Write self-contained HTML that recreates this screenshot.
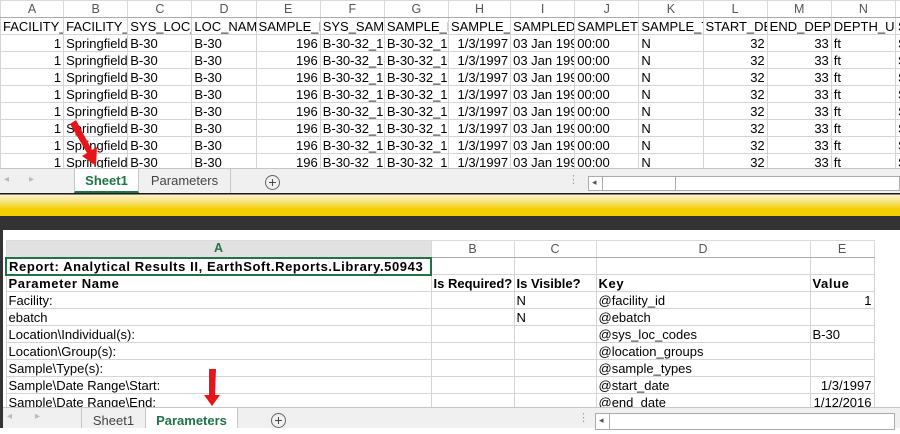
<!DOCTYPE html>
<html><head><meta charset="utf-8"><style>
*{margin:0;padding:0;box-sizing:border-box}
body{width:900px;height:428px;overflow:hidden;background:#fff;font-family:"Liberation Sans","DejaVu Sans",sans-serif;font-size:13px;color:#000;position:relative}
table{border-collapse:collapse;table-layout:fixed;position:absolute}
td{border:1px solid #d4d4d4;height:17px;padding:0 2px;white-space:nowrap;overflow:hidden;line-height:15px}
tr.h td{background:#fff;color:#555;text-align:center;font-size:12.5px;border-color:#dadada;border-bottom:1px solid #ababab}
.r{text-align:right}
.b td{font-weight:bold;letter-spacing:0.6px}
.tabbar{position:absolute;left:0;width:900px;background:#f0f0f0;border-top:1px solid #c6c6c6}
.tab{position:absolute;top:0;height:100%;text-align:center;color:#444;font-size:13px;line-height:24px;border-right:1px solid #c6c6c6}
.tab.on{background:#fff;color:#217346;font-weight:bold;border-bottom:2px solid #217346}
.plus{position:absolute;width:15px;height:15px;border:1px solid #666;border-radius:50%;color:#444;text-align:center;line-height:12px;font-size:14px}
</style></head><body>

<table style="left:0;top:0;width:912px">
<colgroup><col style="width:63px"><col style="width:64px"><col style="width:64px"><col style="width:64px"><col style="width:64px"><col style="width:64px"><col style="width:64px"><col style="width:62px"><col style="width:64px"><col style="width:64px"><col style="width:64px"><col style="width:64px"><col style="width:64px"><col style="width:64px"><col style="width:16px"></colgroup>
<tr class="h"><td>A</td><td>B</td><td>C</td><td>D</td><td>E</td><td>F</td><td>G</td><td>H</td><td>I</td><td>J</td><td>K</td><td>L</td><td>M</td><td>N</td><td></td></tr>
<tr><td>FACILITY_I</td><td>FACILITY_C</td><td>SYS_LOC_C</td><td>LOC_NAME</td><td>SAMPLE_ID</td><td>SYS_SAMP</td><td>SAMPLE_N</td><td>SAMPLE_D</td><td>SAMPLEDA</td><td>SAMPLETIM</td><td>SAMPLE_T</td><td>START_DE</td><td>END_DEPT</td><td>DEPTH_UN</td><td>S</td></tr>
<tr><td class="r">1</td><td>Springfield</td><td>B-30</td><td>B-30</td><td class="r">196</td><td>B-30-32_19</td><td>B-30-32_19</td><td class="r">1/3/1997</td><td>03 Jan 199</td><td>00:00</td><td>N</td><td class="r">32</td><td class="r">33</td><td>ft</td><td>S</td></tr>
<tr><td class="r">1</td><td>Springfield</td><td>B-30</td><td>B-30</td><td class="r">196</td><td>B-30-32_19</td><td>B-30-32_19</td><td class="r">1/3/1997</td><td>03 Jan 199</td><td>00:00</td><td>N</td><td class="r">32</td><td class="r">33</td><td>ft</td><td>S</td></tr>
<tr><td class="r">1</td><td>Springfield</td><td>B-30</td><td>B-30</td><td class="r">196</td><td>B-30-32_19</td><td>B-30-32_19</td><td class="r">1/3/1997</td><td>03 Jan 199</td><td>00:00</td><td>N</td><td class="r">32</td><td class="r">33</td><td>ft</td><td>S</td></tr>
<tr><td class="r">1</td><td>Springfield</td><td>B-30</td><td>B-30</td><td class="r">196</td><td>B-30-32_19</td><td>B-30-32_19</td><td class="r">1/3/1997</td><td>03 Jan 199</td><td>00:00</td><td>N</td><td class="r">32</td><td class="r">33</td><td>ft</td><td>S</td></tr>
<tr><td class="r">1</td><td>Springfield</td><td>B-30</td><td>B-30</td><td class="r">196</td><td>B-30-32_19</td><td>B-30-32_19</td><td class="r">1/3/1997</td><td>03 Jan 199</td><td>00:00</td><td>N</td><td class="r">32</td><td class="r">33</td><td>ft</td><td>S</td></tr>
<tr><td class="r">1</td><td>Springfield</td><td>B-30</td><td>B-30</td><td class="r">196</td><td>B-30-32_19</td><td>B-30-32_19</td><td class="r">1/3/1997</td><td>03 Jan 199</td><td>00:00</td><td>N</td><td class="r">32</td><td class="r">33</td><td>ft</td><td>S</td></tr>
<tr><td class="r">1</td><td>Springfield</td><td>B-30</td><td>B-30</td><td class="r">196</td><td>B-30-32_19</td><td>B-30-32_19</td><td class="r">1/3/1997</td><td>03 Jan 199</td><td>00:00</td><td>N</td><td class="r">32</td><td class="r">33</td><td>ft</td><td>S</td></tr>
<tr><td class="r">1</td><td>Springfield</td><td>B-30</td><td>B-30</td><td class="r">196</td><td>B-30-32_19</td><td>B-30-32_19</td><td class="r">1/3/1997</td><td>03 Jan 199</td><td>00:00</td><td>N</td><td class="r">32</td><td class="r">33</td><td>ft</td><td>S</td></tr>
</table>

<div class="tabbar" style="top:168px;height:25px">
 <span style="position:absolute;left:4px;top:5px;color:#bbb;font-size:10px">◂</span>
 <span style="position:absolute;left:29px;top:5px;color:#bbb;font-size:10px">▸</span>
 <div class="tab on" style="left:74px;width:65px;border-left:1px solid #c6c6c6">Sheet1</div>
 <div class="tab" style="left:139px;width:92px">Parameters</div>
 <div class="plus" style="left:265px;top:6px">+</div>
 <span style="position:absolute;left:568px;top:4px;color:#999;font-size:11px">⋮</span>
 <div style="position:absolute;left:588px;top:7px;width:312px;height:15px;border:1px solid #ababab;background:#fff"></div>
 <div style="position:absolute;left:588px;top:7px;width:88px;height:15px;border:1px solid #ababab;background:#fff"><span style="position:absolute;left:3px;top:0;font-size:9px;color:#555">◂</span><div style="position:absolute;left:13px;top:0;width:1px;height:13px;background:#ababab"></div></div>
</div>

<div style="position:absolute;left:0;top:193px;width:900px;height:23px;background:linear-gradient(#1a1a1a 0,#1a1a1a 1px,#fdf2c8 2px,#f8e27a 9px,#f4cf00 16px,#f4cf00 23px)"></div>
<div style="position:absolute;left:0;top:216px;width:900px;height:14px;background:#333"></div>
<div style="position:absolute;left:0;top:230px;width:3px;height:198px;background:#333"></div>
<div style="position:absolute;left:3px;top:230px;width:897px;height:198px;background:#fff"></div>

<table style="left:5px;top:240px;width:880px">
<colgroup><col style="width:425px"><col style="width:83px"><col style="width:82px"><col style="width:214px"><col style="width:64px"><col style="width:12px"></colgroup>
<tr class="h"><td style="background:#e1e1e1;color:#217346;font-weight:bold;border-bottom:2px solid #217346">A</td><td>B</td><td>C</td><td>D</td><td>E</td><td style="border:none"></td></tr>
<tr class="b"><td style="border:2px solid #217346">Report: Analytical Results II, EarthSoft.Reports.Library.50943</td><td></td><td></td><td></td><td></td><td style="border:none"></td></tr>
<tr class="b"><td>Parameter Name</td><td style="letter-spacing:0">Is Required?</td><td style="letter-spacing:0">Is Visible?</td><td>Key</td><td>Value</td><td style="border:none"></td></tr>
<tr><td>Facility:</td><td></td><td>N</td><td>@facility_id</td><td class="r">1</td><td style="border:none"></td></tr>
<tr><td>ebatch</td><td></td><td>N</td><td>@ebatch</td><td></td><td style="border:none"></td></tr>
<tr><td>Location\Individual(s):</td><td></td><td></td><td>@sys_loc_codes</td><td>B-30</td><td style="border:none"></td></tr>
<tr><td>Location\Group(s):</td><td></td><td></td><td>@location_groups</td><td></td><td style="border:none"></td></tr>
<tr><td>Sample\Type(s):</td><td></td><td></td><td>@sample_types</td><td></td><td style="border:none"></td></tr>
<tr><td>Sample\Date Range\Start:</td><td></td><td></td><td>@start_date</td><td class="r">1/3/1997</td><td style="border:none"></td></tr>
<tr><td>Sample\Date Range\End:</td><td></td><td></td><td>@end_date</td><td class="r">1/12/2016</td><td style="border:none"></td></tr>
</table>

<div class="tabbar" style="top:407px;left:3px;width:897px;height:21px">
 <span style="position:absolute;left:4px;top:3px;color:#bbb;font-size:10px">◂</span>
 <span style="position:absolute;left:32px;top:3px;color:#bbb;font-size:10px">▸</span>
 <div class="tab" style="left:78px;width:65px;border-left:1px solid #c6c6c6;line-height:26px">Sheet1</div>
 <div class="tab on" style="left:143px;width:92px;line-height:26px;border-bottom:none">Parameters</div>
 <div class="plus" style="left:268px;top:5px">+</div>
 <span style="position:absolute;left:575px;top:3px;color:#999;font-size:11px">⋮</span>
 <div style="position:absolute;left:592px;top:5px;width:300px;height:17px;border:1px solid #ababab;background:#fff"><span style="position:absolute;left:3px;top:1px;font-size:9px;color:#555">◂</span><div style="position:absolute;left:13px;top:0;width:1px;height:15px;background:#ababab"></div></div>
</div>

<svg style="position:absolute;left:0;top:0" width="900" height="428">
 <g fill="#e8141b">
  <path d="M70,124 L76,120 L92,150 L97,147 L96,166 L82,156 L87,153 Z"/>
  <path d="M209,369 L216,369 L215,395 L220,395 L212,406 L204,395 L209,395 Z"/>
 </g>
</svg>
</body></html>
